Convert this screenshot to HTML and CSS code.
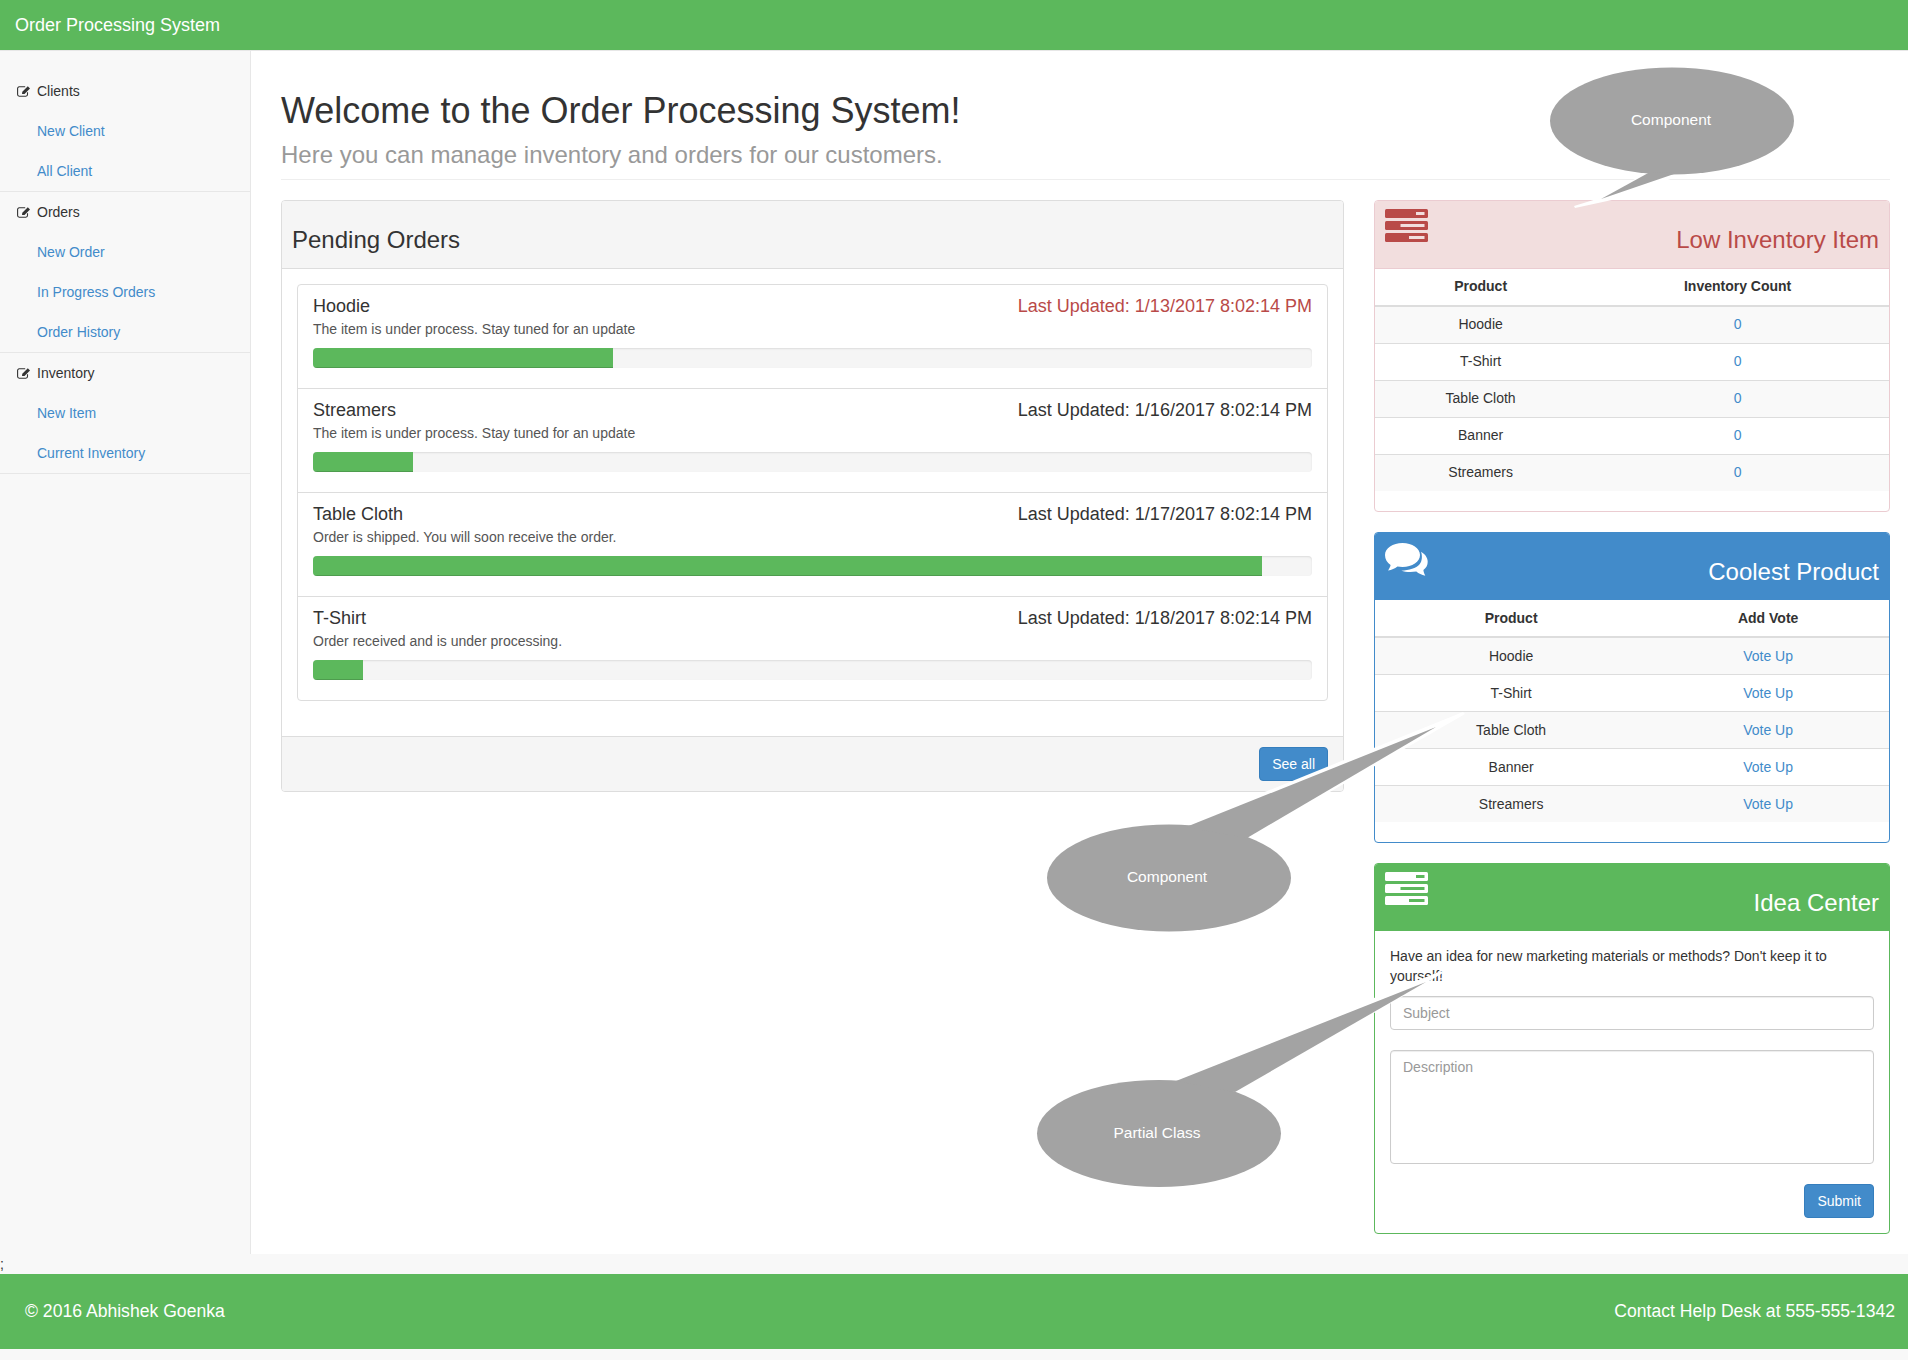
FILE: index.html
```html
<!DOCTYPE html>
<html lang="en">
<head>
  <meta charset="utf-8">
  <title>Order Processing System</title>
  <link rel="stylesheet" href="styles.css">
</head>
<body>
  <header class="top-bar">Order Processing System</header>

  <div class="wrapper">
    <nav class="sidebar">
      <ul class="side-group">
        <li class="side-title"><svg class="edit-icon" viewBox="0 0 14 12"><path d="M10.500 7.200v2.400a1.600 1.600 0 0 1-1.600 1.600H2.200A1.600 1.600 0 0 1 .6 9.600V3.400a1.600 1.600 0 0 1 1.600-1.600h6" fill="none" stroke="currentColor" stroke-width="1.100"/><path d="M5.300 6.700 10.800 1.200l2.200 2.200-5.500 5.500-2.500.2z" fill="currentColor"/></svg>Clients</li>
        <li><a href="#">New Client</a></li>
        <li><a href="#">All Client</a></li>
      </ul>
      <ul class="side-group">
        <li class="side-title"><svg class="edit-icon" viewBox="0 0 14 12"><path d="M10.500 7.200v2.400a1.600 1.600 0 0 1-1.600 1.600H2.200A1.600 1.600 0 0 1 .6 9.600V3.400a1.600 1.600 0 0 1 1.600-1.600h6" fill="none" stroke="currentColor" stroke-width="1.100"/><path d="M5.300 6.700 10.800 1.200l2.200 2.200-5.500 5.500-2.500.2z" fill="currentColor"/></svg>Orders</li>
        <li><a href="#">New Order</a></li>
        <li><a href="#">In Progress Orders</a></li>
        <li><a href="#">Order History</a></li>
      </ul>
      <ul class="side-group">
        <li class="side-title"><svg class="edit-icon" viewBox="0 0 14 12"><path d="M10.500 7.200v2.400a1.600 1.600 0 0 1-1.600 1.600H2.200A1.600 1.600 0 0 1 .6 9.600V3.400a1.600 1.600 0 0 1 1.600-1.600h6" fill="none" stroke="currentColor" stroke-width="1.100"/><path d="M5.300 6.700 10.800 1.200l2.200 2.200-5.500 5.500-2.500.2z" fill="currentColor"/></svg>Inventory</li>
        <li><a href="#">New Item</a></li>
        <li><a href="#">Current Inventory</a></li>
      </ul>
    </nav>

    <main class="page">
      <div class="page-header">
        <h1>Welcome to the Order Processing System!<br><small>Here you can manage inventory and orders for our customers.</small></h1>
      </div>

      <div class="columns">
        <section class="panel">
          <div class="panel-heading">
            <h3>Pending Orders</h3>
          </div>
          <div class="panel-body">
            <div class="list-group">
              <div class="list-item">
                <div class="item-head"><h4>Hoodie</h4><h4 class="overdue">Last Updated: 1/13/2017 8:02:14 PM</h4></div>
                <p>The item is under process. Stay tuned for an update</p>
                <div class="progress"><div class="bar" style="width: 30%"></div></div>
              </div>
              <div class="list-item">
                <div class="item-head"><h4>Streamers</h4><h4>Last Updated: 1/16/2017 8:02:14 PM</h4></div>
                <p>The item is under process. Stay tuned for an update</p>
                <div class="progress"><div class="bar" style="width: 10%"></div></div>
              </div>
              <div class="list-item">
                <div class="item-head"><h4>Table Cloth</h4><h4>Last Updated: 1/17/2017 8:02:14 PM</h4></div>
                <p>Order is shipped. You will soon receive the order.</p>
                <div class="progress"><div class="bar" style="width: 95%"></div></div>
              </div>
              <div class="list-item">
                <div class="item-head"><h4>T-Shirt</h4><h4>Last Updated: 1/18/2017 8:02:14 PM</h4></div>
                <p>Order received and is under processing.</p>
                <div class="progress"><div class="bar" style="width: 5%"></div></div>
              </div>
            </div>
          </div>
          <div class="panel-footer">
            <button class="btn">See all</button>
          </div>
        </section>

        <aside class="side-panels">
          <section class="panel panel-red">
            <div class="panel-heading">
              <svg class="server-icon" viewBox="0 0 43 33">
                <rect y="0" width="43" height="9" rx="1.5" fill="currentColor"/>
                <rect y="12" width="43" height="9" rx="1.5" fill="currentColor"/>
                <rect y="24" width="43" height="9" rx="1.5" fill="currentColor"/>
                <rect class="slot" x="31" y="3" width="8.5" height="3"/>
                <rect class="slot" x="15.5" y="15" width="24" height="3"/>
                <rect class="slot" x="24" y="27" width="15.5" height="3"/>
              </svg>
              <h3>Low Inventory Item</h3>
            </div>
            <table class="table">
              <thead><tr><th>Product</th><th>Inventory Count</th></tr></thead>
              <tbody>
                <tr><td>Hoodie</td><td><a href="#">0</a></td></tr>
                <tr><td>T-Shirt</td><td><a href="#">0</a></td></tr>
                <tr><td>Table Cloth</td><td><a href="#">0</a></td></tr>
                <tr><td>Banner</td><td><a href="#">0</a></td></tr>
                <tr><td>Streamers</td><td><a href="#">0</a></td></tr>
              </tbody>
            </table>
          </section>

          <section class="panel panel-blue">
            <div class="panel-heading">
              <svg class="comments-icon" viewBox="0 0 43 36">
                <path d="M17.5 0C27.2 0 35 5.4 35 12s-7.800 12-17.500 12c-1.800 0-3.500-.2-5.100-.5C9.800 25.600 6.800 27 3 27.500c1.300-1.700 2.200-3.500 2.600-5.500C2.100 19.800 0 16.100 0 12 0 5.400 7.800 0 17.500 0z" fill="currentColor"/>
                <path d="M36 8.700c4 2.200 6.700 6 6.700 10 0 3.400-1.500 6.200-4.300 8.300.2 2 .9 4 1.900 5.700-3.600-.7-6.600-2.200-9-4.200-5.400.9-11.200.5-15-.8 8-.3 14.700-2.400 18.300-6.400 2.600-3 2.900-8.600 1.400-12.600z" fill="currentColor"/>
              </svg>
              <h3>Coolest Product</h3>
            </div>
            <table class="table">
              <thead><tr><th>Product</th><th>Add Vote</th></tr></thead>
              <tbody>
                <tr><td>Hoodie</td><td><a href="#">Vote Up</a></td></tr>
                <tr><td>T-Shirt</td><td><a href="#">Vote Up</a></td></tr>
                <tr><td>Table Cloth</td><td><a href="#">Vote Up</a></td></tr>
                <tr><td>Banner</td><td><a href="#">Vote Up</a></td></tr>
                <tr><td>Streamers</td><td><a href="#">Vote Up</a></td></tr>
              </tbody>
            </table>
          </section>

          <section class="panel panel-green">
            <div class="panel-heading">
              <svg class="server-icon" viewBox="0 0 43 33">
                <rect y="0" width="43" height="9" rx="1.5" fill="currentColor"/>
                <rect y="12" width="43" height="9" rx="1.5" fill="currentColor"/>
                <rect y="24" width="43" height="9" rx="1.5" fill="currentColor"/>
                <rect class="slot" x="31" y="3" width="8.5" height="3"/>
                <rect class="slot" x="15.5" y="15" width="24" height="3"/>
                <rect class="slot" x="24" y="27" width="15.5" height="3"/>
              </svg>
              <h3>Idea Center</h3>
            </div>
            <div class="panel-body">
              <p class="idea-text">Have an idea for new marketing materials or methods? Don't keep it to yourself!</p>
              <form class="idea-form">
                <input class="control" type="text" placeholder="Subject">
                <textarea class="control" rows="5" placeholder="Description"></textarea>
                <div class="form-actions"><button class="btn" type="button">Submit</button></div>
              </form>
            </div>
          </section>
        </aside>
      </div>
    </main>
  </div>

  <div class="stray">;</div>

  <footer class="footer">
    <span>© 2016 Abhishek Goenka</span>
    <span>Contact Help Desk at 555-555-1342</span>
  </footer>

  <!-- annotation balloons drawn over the screenshot -->
  <svg class="balloons" width="1908" height="1360" viewBox="0 0 1908 1360">
    <polygon class="balloon-edge" points="1648,172 1600,198 1574,206 1575,208 1612,200 1682,175"/>
    <ellipse class="balloon" cx="1672" cy="121" rx="122" ry="53.500"/>
    <polygon class="balloon" points="1650,172 1601,199 1677,173"/>

    <polygon class="balloon-edge" points="1183,825 1463,712 1465,714 1250,838"/>
    <ellipse class="balloon" cx="1169" cy="878" rx="122" ry="53.500"/>
    <polygon class="balloon" points="1186,827 1436,727 1247,838"/>

    <polygon class="balloon-edge" points="1173,1079 1441,971 1443,973 1238,1092"/>
    <ellipse class="balloon" cx="1159" cy="1133.500" rx="122" ry="53.500"/>
    <polygon class="balloon" points="1176,1081 1426,982 1235,1092"/>
  </svg>
  <span class="balloon-label label-one">Component</span>
  <span class="balloon-label label-two">Component</span>
  <span class="balloon-label label-three">Partial Class</span>
</body>
</html>
```

FILE: styles.css
```css
* {
  box-sizing: border-box;
}

body {
  margin: 0;
  position: relative;
  font-family: "Liberation Sans", Arial, sans-serif;
  font-size: 14px;
  line-height: 20px;
  color: #333;
  background-color: #f8f8f8;
}

a {
  color: #428bca;
  text-decoration: none;
}

/* top bar */
.top-bar {
  height: 51px;
  padding: 0 15px 1px;
  line-height: 50px;
  font-size: 18px;
  color: #fff;
  background-color: #5cb85c;
  border-bottom: 1px solid #e7e7e7;
}

.wrapper {
  display: flex;
}

/* sidebar */
.sidebar {
  flex: 0 0 251px;
  padding-top: 20px;
  border-right: 1px solid #e7e7e7;
}

.side-group {
  list-style: none;
  margin: 0;
  padding: 0;
  border-bottom: 1px solid #e7e7e7;
}

.side-title {
  display: flex;
  align-items: center;
  height: 40px;
  padding-left: 17px;
}

.edit-icon {
  width: 14px;
  height: 12px;
  margin-right: 6px;
}

.side-group a {
  display: block;
  height: 40px;
  padding: 10px 15px 10px 37px;
}

/* main area */
.page {
  flex: 1;
  min-width: 0;
  padding: 0 18px 20px 30px;
  background-color: #fff;
}

.page-header {
  margin: 40px 0 20px;
  padding-bottom: 8.8px;
  border-bottom: 1px solid #eee;
}

.page-header h1 {
  margin: 0;
  font-size: 36px;
  font-weight: 400;
  line-height: 1.1;
}

.page-header small {
  font-size: 24px;
  color: #999;
}

.columns {
  display: grid;
  grid-template-columns: 1063px 516px;
  gap: 30px;
  align-items: start;
}

.side-panels .panel + .panel {
  margin-top: 20px;
}

/* panels */
.panel {
  background-color: #fff;
  border: 1px solid #ddd;
  border-radius: 4px;
}

.panel-heading {
  height: 68px;
  padding: 10px;
  background-color: #f5f5f5;
  border-bottom: 1px solid #ddd;
  border-radius: 3px 3px 0 0;
}

.panel-heading h3 {
  margin: 16px 0 0;
  font-size: 24px;
  font-weight: 400;
  line-height: 1.1;
}

.panel-body {
  padding: 15px;
}

.panel-footer {
  display: flex;
  justify-content: flex-end;
  padding: 10px 15px;
  background-color: #f5f5f5;
  border-top: 1px solid #ddd;
  border-radius: 0 0 3px 3px;
}

.side-panels .panel-heading h3 {
  text-align: right;
}

.server-icon {
  float: left;
  width: 43px;
  height: 33px;
  margin-top: -2px;
}

.comments-icon {
  float: left;
  width: 43px;
  height: 36px;
}

.panel-red {
  border-color: #ebccd1;
}

.panel-red .panel-heading {
  color: #b94a48;
  background-color: #f2dede;
  border-bottom-color: #ebccd1;
}

.panel-red .slot {
  fill: #f2dede;
}

.panel-blue {
  border-color: #428bca;
}

.panel-blue .panel-heading {
  height: 67px;
  color: #fff;
  background-color: #428bca;
  border-bottom-color: #428bca;
}

.panel-green {
  border-color: #5cb85c;
}

.panel-green .panel-heading {
  height: 67px;
  color: #fff;
  background-color: #5cb85c;
  border-bottom-color: #5cb85c;
}

.panel-green .slot {
  fill: #5cb85c;
}

/* order list */
.list-group {
  margin-bottom: 20px;
  border: 1px solid #ddd;
  border-radius: 4px;
}

.list-item {
  height: 104px;
  padding: 11px 15px 0;
  border-bottom: 1px solid #ddd;
}

.list-item:last-child {
  height: 103px;
  border-bottom: 0;
}

.item-head {
  display: flex;
  justify-content: space-between;
}

.item-head h4 {
  margin: 0 0 3px;
  font-size: 18px;
  font-weight: 400;
  line-height: 20px;
}

.item-head .overdue {
  color: #b94a48;
}

.list-item p {
  margin: 0 0 9px;
  color: #555;
}

.progress {
  height: 20px;
  overflow: hidden;
  background-color: #f5f5f5;
  border-radius: 4px;
  box-shadow: inset 0 1px 2px rgba(0, 0, 0, .1);
}

.bar {
  height: 100%;
  background-color: #5cb85c;
  box-shadow: inset 0 -1px 0 rgba(0, 0, 0, .15);
}

/* buttons */
.btn {
  height: 34px;
  padding: 6px 12px;
  font-family: inherit;
  font-size: 14px;
  line-height: 20px;
  color: #fff;
  background-color: #428bca;
  border: 1px solid #357ebd;
  border-radius: 4px;
}

/* tables */
.table {
  width: 100%;
  margin-bottom: 20px;
  border-collapse: separate;
  border-spacing: 0;
  text-align: center;
}

.table th {
  padding: 7px 8px 9px;
  border-bottom: 2px solid #ddd;
}

.table td {
  padding: 7px 8px 9px;
  border-top: 1px solid #ddd;
}

.panel-blue .table th,
.panel-blue .table td {
  padding: 8px;
}

.table tbody tr:first-child td {
  border-top: 0;
}

.table tbody tr:nth-child(odd) {
  background-color: #f9f9f9;
}

/* idea form */
.idea-text {
  margin: 0 0 10px;
}

.control {
  display: block;
  width: 100%;
  margin-bottom: 20px;
  padding: 6px 12px;
  font-family: inherit;
  font-size: 14px;
  line-height: 20px;
  color: #555;
  background-color: #fff;
  border: 1px solid #ccc;
  border-radius: 4px;
  box-shadow: inset 0 1px 1px rgba(0, 0, 0, .075);
  resize: none;
}

input.control {
  height: 34px;
}

textarea.control {
  height: 114px;
}

.control::placeholder {
  color: #999;
  opacity: 1;
}

.form-actions {
  display: flex;
  justify-content: flex-end;
}

/* bottom of the page */
.stray {
  height: 20px;
  line-height: 20px;
}

.footer {
  display: flex;
  justify-content: space-between;
  align-items: center;
  height: 75px;
  padding: 0 13px 0 25px;
  font-size: 17.6px;
  color: #fff;
  background-color: #5cb85c;
}

/* annotation balloons */
.balloons {
  position: absolute;
  left: 0;
  top: 0;
  pointer-events: none;
}

.balloon {
  fill: #a3a3a3;
}

.balloon-edge {
  fill: #fff;
}

.balloon-label {
  position: absolute;
  font-size: 15.5px;
  color: #fff;
  transform: translateX(-50%);
}

.label-one {
  left: 1671px;
  top: 110px;
}

.label-two {
  left: 1167px;
  top: 867px;
}

.label-three {
  left: 1157px;
  top: 1123px;
}
```
